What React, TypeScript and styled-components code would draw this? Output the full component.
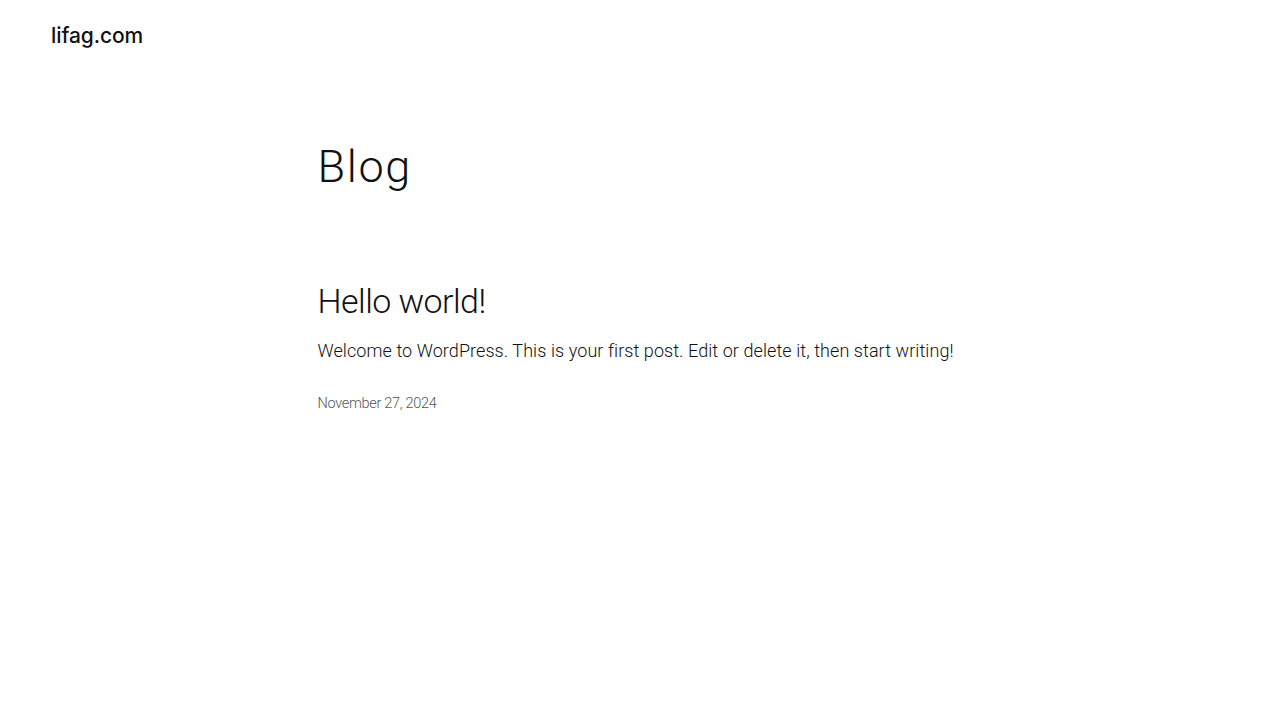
import React from "react";
import styled, { createGlobalStyle } from "styled-components";

const Global = createGlobalStyle`
  html, body { margin: 0; padding: 0; background: #fff; }
  body { font-family: Roboto, "Noto Sans", sans-serif; color: #111; -webkit-font-smoothing: antialiased; }
  * { box-sizing: border-box; }
`;

const Page = styled.div`
  min-height: 720px;
  display: flex;
  flex-direction: column;
`;

const Header = styled.header`
  display: flex;
  align-items: center;
  height: 70px;
  padding: 0 51px;
`;

const SiteTitle = styled.a`
  font-family: Inter, "Noto Sans", sans-serif;
  font-size: 21px;
  font-weight: 500;
  color: #111;
  text-decoration: none;
  letter-spacing: -0.1px;
`;

const Main = styled.main`
  width: 645px;
  margin: 0 auto;
  display: flex;
  flex-direction: column;
`;

const PageTitle = styled.h1`
  margin: 70px 0 0;
  font-size: 45px;
  font-weight: 300;
  line-height: 54px;
  letter-spacing: 1.6px;
`;

const Post = styled.article`
  margin-top: 87px;
  display: flex;
  flex-direction: column;
`;

const PostTitle = styled.h2`
  margin: 0;
  font-size: 34px;
  font-weight: 300;
  line-height: 40.8px;
  letter-spacing: -0.55px;
`;

const Excerpt = styled.p`
  margin: 15px 0 0;
  font-size: 18px;
  font-weight: 300;
  line-height: 27px;
  letter-spacing: 0.08px;
`;

const PostDate = styled.time`
  display: block;
  margin-top: 29px;
  font-size: 14.5px;
  font-weight: 300;
  line-height: 22.5px;
  letter-spacing: -0.3px;
  color: #555;
`;

export default function App() {
  return (
    <Page>
      <Global />
      <Header>
        <SiteTitle href="#">lifag.com</SiteTitle>
      </Header>
      <Main>
        <PageTitle>Blog</PageTitle>
        <Post>
          <PostTitle>Hello world!</PostTitle>
          <Excerpt>Welcome to WordPress. This is your first post. Edit or delete it, then start writing!</Excerpt>
          <PostDate dateTime="2024-11-27">November 27, 2024</PostDate>
        </Post>
      </Main>
    </Page>
  );
}
